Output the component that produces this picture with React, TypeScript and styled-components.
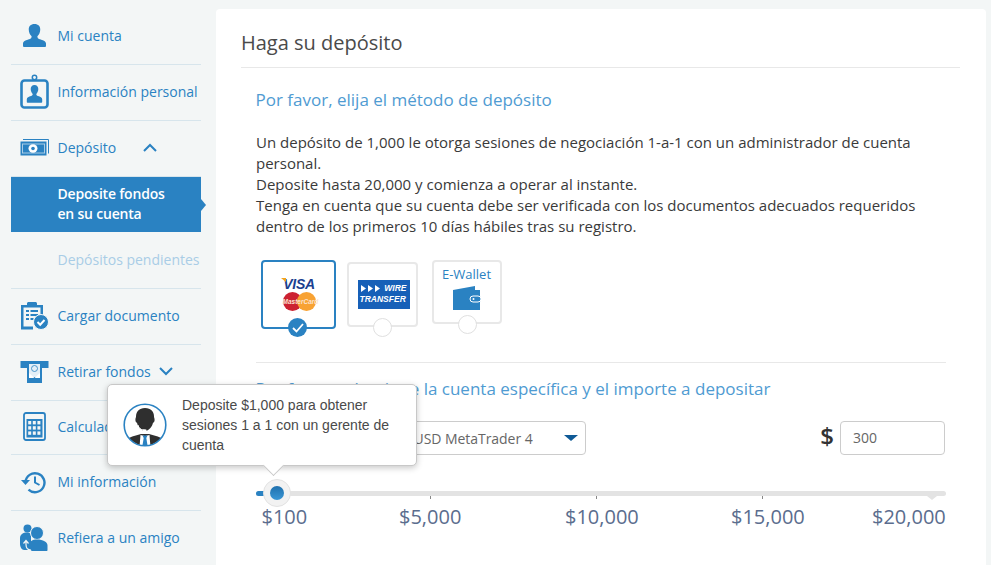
import React from "react";
import styled, { createGlobalStyle } from "styled-components";

const BLUE = "#2a82c2";

const GlobalStyle = createGlobalStyle`
  html, body {
    margin: 0;
    padding: 0;
    background: #f3f6f6;
  }
  body {
    font-family: "Open Sans", sans-serif;
    width: 991px;
    height: 565px;
    overflow: hidden;
  }
`;

const Page = styled.div`
  display: flex;
  height: 565px;
  overflow: hidden;
`;

const Sidebar = styled.nav`
  width: 190px;
  margin: 9px 15px 0 11px;
  flex: none;
`;

const NavItem = styled.a<{ $h?: number; $muted?: boolean; $noLine?: boolean }>`
  display: flex;
  align-items: center;
  height: ${(p) => p.$h ?? 56}px;
  box-sizing: border-box;
  padding-bottom: 2px;
  border-bottom: 1px solid ${(p) => (p.$noLine ? "transparent" : "#d7e5ec")};
  color: ${(p) => (p.$muted ? "#a9cde6" : BLUE)};
  font-size: 14px;
  white-space: nowrap;
`;

const IconSlot = styled.span<{ $inset?: number }>`
  width: 46.5px;
  padding-left: ${(p) => 9 + (p.$inset ?? 0)}px;
  box-sizing: border-box;
  flex: none;
  display: flex;
  align-items: center;
`;

const Chevron = styled.svg<{ $gap: number }>`
  margin-left: ${(p) => p.$gap}px;
  flex: none;
`;

const ActiveItem = styled.a`
  position: relative;
  display: block;
  height: 55px;
  box-sizing: border-box;
  padding: 7px 0 0 46.5px;
  background: ${BLUE};
  color: #fff;
  font-size: 14px;
  font-weight: 600;
  line-height: 20px;
  letter-spacing: -0.2px;
  &::after {
    content: "";
    position: absolute;
    left: 100%;
    top: 22px;
    border-left: 5px solid ${BLUE};
    border-top: 6px solid transparent;
    border-bottom: 6px solid transparent;
  }
`;

const Panel = styled.main`
  flex: none;
  width: 770px;
  height: 600px;
  margin-top: 9px;
  background: #fff;
  border-radius: 4px;
  box-sizing: border-box;
  padding: 0 26px 0 25px;
`;

const Title = styled.h1`
  margin: 0;
  height: 59px;
  box-sizing: border-box;
  padding-top: 19px;
  border-bottom: 1px solid #e8e8e8;
  font-size: 20px;
  line-height: 30px;
  font-weight: 400;
  color: #4a4a4a;
`;

const Body = styled.div`
  padding: 0 14px 0 15px;
`;

const SubTitle = styled.h2<{ $top: number }>`
  margin: ${(p) => p.$top}px 0 0 -0.5px;
  font-size: 17px;
  line-height: 24px;
  font-weight: 400;
  color: #4f9bd2;
`;

const Intro = styled.p`
  margin: 20px 0 0;
  font-size: 15px;
  line-height: 21px;
  color: #3a3a3a;
`;

const Methods = styled.div`
  display: flex;
  align-items: flex-start;
  height: 102px;
  margin-top: 23px;
  padding-left: 5px;
  border-bottom: 1px solid #e8e8e8;
`;

const Method = styled.div<{ $w: number; $h: number; $selected?: boolean; $ml?: number; $mt?: number }>`
  position: relative;
  width: ${(p) => p.$w}px;
  height: ${(p) => p.$h}px;
  margin-left: ${(p) => p.$ml ?? 0}px;
  margin-top: ${(p) => p.$mt ?? 0}px;
  box-sizing: border-box;
  border-radius: 4px;
  border: ${(p) => (p.$selected ? `2px solid ${BLUE}` : "2px solid #e8e8e8")};
  display: flex;
  flex-direction: column;
  align-items: center;
  background: #fff;
`;

const Radio = styled.span<{ $on?: boolean; $bottom: number }>`
  position: absolute;
  left: 50%;
  bottom: ${(p) => p.$bottom}px;
  width: 19px;
  height: 19px;
  margin-left: ${(p) => (p.$on ? -10.5 : -9.5)}px;
  border-radius: 50%;
  background: ${(p) => (p.$on ? BLUE : "#fff")};
  border: ${(p) => (p.$on ? "none" : "1px solid #e0e0e0")};
  box-sizing: border-box;
  display: flex;
  align-items: center;
  justify-content: center;
`;

const WireBox = styled.div`
  margin: 16px 0 0 2px;
  width: 52px;
  height: 29px;
  background: #1760b8;
  color: #fff;
  font-family: "Liberation Sans", sans-serif;
  font-size: 8.5px;
  line-height: 11px;
  font-weight: 700;
  font-style: italic;
  box-sizing: border-box;
  padding: 3px 0 0 2px;
  white-space: nowrap;
`;

const WireTop = styled.div`
  display: flex;
  align-items: center;
  justify-content: space-between;
  padding: 0 3px 0 1px;
`;

const VisaText = styled.div`
  position: relative;
  margin: 16px 0 0 1px;
  font-family: "Liberation Sans", sans-serif;
  font-size: 14px;
  line-height: 12px;
  font-weight: 700;
  font-style: italic;
  letter-spacing: -0.3px;
  color: #1a3f8f;
  &::before {
    content: "";
    position: absolute;
    left: -2px;
    top: 0;
    border-top: 4px solid #f2a31f;
    border-left: 5px solid transparent;
  }
`;

const CardLogo = styled.div`
  position: relative;
  width: 33px;
  height: 19px;
  margin: 2px 0 0 1px;
`;

const MasterText = styled.span`
  position: absolute;
  left: 0;
  right: 0;
  top: 5px;
  text-align: center;
  font-family: "Liberation Sans", sans-serif;
  font-size: 6.5px;
  line-height: 9px;
  font-weight: 700;
  font-style: italic;
  color: #fbe3d0;
  white-space: nowrap;
`;

const EWalletLabel = styled.div`
  margin: 3px 1px 0 0;
  font-size: 13px;
  line-height: 18px;
  color: ${BLUE};
`;

const WalletSvg = styled.svg`
  margin-top: 2px;
`;

const FormRow = styled.div`
  display: flex;
  align-items: center;
  justify-content: flex-end;
  margin-top: 20px;
  height: 34px;
`;

const SelectBox = styled.div`
  width: 264px;
  height: 34px;
  margin-right: auto;
  margin-left: 66px;
  box-sizing: border-box;
  border: 1px solid #ccc;
  border-radius: 4px;
  display: flex;
  align-items: center;
  justify-content: space-between;
  padding: 0 7px 0 90.5px;
  font-size: 14px;
  letter-spacing: -0.05px;
  color: #666;
  white-space: nowrap;
`;

const Caret = styled.span`
  border-top: 6px solid #0f5a96;
  border-left: 7px solid transparent;
  border-right: 7px solid transparent;
`;

const Dollar = styled.span`
  font-size: 24px;
  line-height: 30px;
  font-weight: 600;
  color: #333;
  margin: 0 6px 4px 0;
`;

const AmountInput = styled.div`
  width: 105px;
  height: 34px;
  margin-right: 1px;
  box-sizing: border-box;
  border: 1px solid #ccc;
  border-radius: 4px;
  padding-left: 12px;
  font-size: 14px;
  line-height: 32px;
  color: #666;
`;

const Track = styled.div`
  position: relative;
  height: 5px;
  margin-top: 36px;
  background: #e3e3e3;
  border-radius: 3px;
`;

const TrackFill = styled.div`
  position: absolute;
  left: 0;
  top: 0;
  height: 5px;
  width: 20px;
  background: ${BLUE};
  border-radius: 3px;
`;

const Thumb = styled.div`
  position: absolute;
  left: 7px;
  top: -12px;
  width: 28px;
  height: 28px;
  box-sizing: border-box;
  border-radius: 50%;
  background: #f2f2f2;
  border: 1px solid #e2e2e2;
  display: flex;
  align-items: center;
  justify-content: center;
  &::after {
    content: "";
    width: 14px;
    height: 14px;
    border-radius: 50%;
    background: linear-gradient(#1f70ad, #3a97d6);
  }
`;

const Tick = styled.span<{ $left: number }>`
  position: absolute;
  top: 5px;
  left: ${(p) => p.$left}px;
  width: 1px;
  height: 3px;
  background: #888;
`;

const EndMark = styled.span`
  position: absolute;
  top: 5px;
  right: 9px;
  border-top: 4px solid #e3e3e3;
  border-left: 5px solid transparent;
  border-right: 5px solid transparent;
`;

const Scale = styled.div`
  display: grid;
  grid-template-columns: 137.5px 166px 166px 141px auto;
  margin-top: 8px;
  padding-left: 5.5px;
  font-size: 20px;
  line-height: 26px;
  color: #5b6d8e;
  white-space: nowrap;
`;

const Bubble = styled.div`
  position: absolute;
  left: 107px;
  top: 384px;
  width: 310px;
  height: 82px;
  box-sizing: border-box;
  background: #fff;
  border: 1px solid #c8c8c8;
  border-radius: 5px;
  box-shadow: 0 2px 6px rgba(0, 0, 0, 0.22);
  display: flex;
  align-items: center;
  padding-left: 15px;
  &::after {
    content: "";
    position: absolute;
    left: 158px;
    bottom: -8px;
    width: 14px;
    height: 14px;
    background: #fff;
    border-right: 1px solid #c8c8c8;
    border-bottom: 1px solid #c8c8c8;
    transform: rotate(45deg);
  }
`;

const AgentSvg = styled.svg`
  flex: none;
`;

const BubbleText = styled.div`
  margin-left: 15px;
  font-family: "Liberation Sans", sans-serif;
  font-size: 14px;
  line-height: 20px;
  color: #4a4a4a;
  white-space: nowrap;
`;

const UserIcon = () => (
  <svg width="23" height="23" viewBox="0 0 24 26" preserveAspectRatio="none" fill={BLUE}>
    <path d="M12 0c4 0 6 2.500 6 6.300 0 3.200-1.300 6-3 7.500 0 1.800.7 2.800 2.500 3.400 3 1 6.500 2 6.500 4.800v3c0 .6-.4 1-1 1H1c-.6 0-1-.4-1-1v-3c0-2.800 3.500-3.800 6.500-4.800 1.800-.6 2.500-1.600 2.500-3.400-1.700-1.500-3-4.300-3-7.500C6 2.500 8 0 12 0z" />
  </svg>
);

const BadgeIcon = () => (
  <svg width="29" height="35" viewBox="0 0 29 35">
    <rect x="1.500" y="6.500" width="26" height="27" rx="3" fill="none" stroke={BLUE} strokeWidth="2.600" />
    <circle cx="14.500" cy="3.500" r="2.200" fill="none" stroke={BLUE} strokeWidth="1.500" />
    <path fill={BLUE} d="M14.500 11c2.500 0 3.800 1.700 3.800 4.100 0 2-.9 3.800-2 4.800 0 1 .5 1.700 1.700 2.100 2.100.7 4.200 1.400 4.200 3.300V28c0 .4-.3.700-.7.700H7.500c-.4 0-.7-.3-.7-.7v-2.700c0-1.900 2.100-2.600 4.200-3.300 1.200-.4 1.700-1.100 1.700-2.100-1.100-1-2-2.800-2-4.800 0-2.400 1.300-4.100 3.800-4.100z" />
  </svg>
);

const CashIcon = () => (
  <svg width="29" height="17" viewBox="0 0 29 17">
    <path d="M3 .5h25.500v14" stroke={BLUE} strokeWidth="1" fill="none" />
    <rect x="0.500" y="2.500" width="26" height="14" fill={BLUE} />
    <rect x="2.500" y="5" width="22" height="9" fill={BLUE} stroke="#a9cde6" strokeWidth="1" />
    <ellipse cx="13" cy="9.500" rx="4.500" ry="4.200" fill="#fff" />
    <circle cx="13" cy="9.500" r="1.800" fill={BLUE} />
  </svg>
);

const ClipboardIcon = () => (
  <svg width="29" height="29" viewBox="0 0 29 29">
    <path fill={BLUE} d="M1 4h6V2.500C7 1.700 7.700 1 8.500 1h7c.8 0 1.500.7 1.500 1.500V4h6v11h-2.500V6.500h-17v19H13v3H1z" />
    <path fill={BLUE} d="M6 9h3v2H6zm4.500 0H18v2h-7.500zM6 13h3v2H6zm4.500 0H18v2h-7.500zM6 17h3v2H6zm4.500 0h3v2h-3z" />
    <circle cx="21" cy="21" r="7.500" fill={BLUE} stroke="#f3f6f6" strokeWidth="1" />
    <path d="M17.500 21l2.700 2.700 4.300-4.700" fill="none" stroke="#fff" strokeWidth="2" />
  </svg>
);

const AtmIcon = () => (
  <svg width="29" height="22" viewBox="0 0 29 22">
    <rect x="0.500" y="0" width="28" height="7" fill={BLUE} />
    <rect x="7" y="3" width="15" height="19" fill={BLUE} />
    <rect x="9" y="3" width="11" height="13" fill="#e4eff7" />
    <path d="M9 12l5.500 5 5.500-5v5H9z" fill="#fff" />
    <circle cx="14.500" cy="7.500" r="3" fill="none" stroke={BLUE} strokeWidth="0.800" />
  </svg>
);

const CalcIcon = () => (
  <svg width="29" height="29" viewBox="0 0 29 29">
    <rect x="4" y="1" width="21" height="27" rx="2" fill="none" stroke={BLUE} strokeWidth="1.800" />
    <rect x="6.500" y="7" width="16" height="18.500" fill={BLUE} />
    {[0, 1, 2].map((r) =>
      [0, 1, 2].map((c) => (
        <rect key={`${r}-${c}`} x={8.2 + c * 4.6} y={9 + r * 5.2} width="3" height="3.400" fill="#f3f6f6" />
      ))
    )}
  </svg>
);

const HistoryIcon = () => (
  <svg width="26" height="24" viewBox="0 0 26 24" fill="none" stroke={BLUE} strokeWidth="2.400">
    <path d="M5.500 12a9.500 9.500 0 1 1 3 7.700" />
    <path d="M1 10l4.500 5 4.500-5z" fill={BLUE} stroke="none" />
    <path d="M15 6.500V12.500l4.500 2.500" strokeWidth="2" />
  </svg>
);

const FriendsIcon = () => (
  <svg width="28" height="27" viewBox="0 0 28 27" fill={BLUE}>
    <circle cx="7.500" cy="4.500" r="4" />
    <path d="M0 14c0-3.500 3-5.500 7-5.500 1.500 0 3 .5 4 1.500v16H4C2 26 0 23 0 20z" />
    <circle cx="17" cy="9" r="6.500" stroke="#f3f6f6" strokeWidth="1" />
    <path d="M9 21c0-3.500 3.500-5.500 8-5.500 6 0 10.500 2.500 10.500 6V26c0 .6-.4 1-1 1H12c-1 0-3-3-3-6z" />
    <path d="M11 26c-3 0-5-2-5-5.500V17M3.500 19.500L6 16.500l2.500 3" fill="none" stroke="#f3f6f6" strokeWidth="1.200" />
  </svg>
);

const ChevronIcon = ({ up, gap }: { up?: boolean; gap: number }) => (
  <Chevron $gap={gap} width="14" height="9" viewBox="0 0 14 9" fill="none" stroke={BLUE} strokeWidth="2">
    <path d={up ? "M1 8l6-6 6 6" : "M1 1l6 6 6-6"} />
  </Chevron>
);

const AgentIcon = () => (
  <AgentSvg width="44" height="44" viewBox="0 0 44 44">
    <defs>
      <clipPath id="agentClip">
        <circle cx="22" cy="22" r="20.500" />
      </clipPath>
    </defs>
    <circle cx="22" cy="22" r="21" fill="#fff" />
    <g clipPath="url(#agentClip)">
      <path fill="#2f2f2f" d="M3 44v-5c0-3 3-4.500 8-6l7-2h8l7 2c5 1.500 8 3 8 6v5z" />
      <path fill="#fff" d="M17.500 32l4.500 1 4.500-1 1 12h-11z" />
      <path fill={BLUE} d="M19.500 32.500h5l-1.200 2.500 1.500 9h-5.600l1.500-9z" />
      <path fill="#2f2f2f" d="M22 5c6 0 9 4 9 8.500 0 1 .6 1.800.6 3.400s-.8 2.600-1.600 2.900c-.8 3.800-4 8.200-8 8.200s-7.200-4.400-8-8.200c-.8-.3-1.600-1.300-1.600-2.900s.6-2.400.6-3.400C13 9 16 5 22 5z" />
      <path fill="none" stroke="#fff" strokeWidth="1" d="M15 22c.5 3 3 5 6 5.200" />
      <ellipse cx="21.500" cy="27.300" rx="2.200" ry="1" fill="#fff" />
    </g>
    <circle cx="22" cy="22" r="20.800" fill="none" stroke={BLUE} strokeWidth="1.600" />
  </AgentSvg>
);

const WalletIcon = () => (
  <WalletSvg width="28" height="26" viewBox="0 0 28 26" fill={BLUE}>
    <path d="M0 5L22 1v4z" />
    <rect x="0" y="5" width="27" height="20" />
    <rect x="17" y="11" width="11" height="6" rx="3" fill={BLUE} stroke="#fff" strokeWidth="1" />
    <circle cx="20.500" cy="14" r="1" fill="#fff" />
  </WalletSvg>
);

const WireArrows = () => (
  <svg width="20" height="7" viewBox="0 0 20 7" fill="#fff">
    <path d="M0 0l5 3.500L0 7zM7 0l5 3.500L7 7zM14 0l5 3.500L14 7z" />
  </svg>
);

const App: React.FC = () => (
  <Page>
    <GlobalStyle />
    <Sidebar>
      <NavItem>
        <IconSlot $inset={3}><UserIcon /></IconSlot>
        Mi cuenta
      </NavItem>
      <NavItem>
        <IconSlot><BadgeIcon /></IconSlot>
        Información personal
      </NavItem>
      <NavItem>
        <IconSlot><CashIcon /></IconSlot>
        Depósito
        <ChevronIcon up gap={27} />
      </NavItem>
      <ActiveItem>
        Deposite fondos
        <br />
        en su cuenta
      </ActiveItem>
      <NavItem $h={57} $muted>
        <IconSlot />
        Depósitos pendientes
      </NavItem>
      <NavItem>
        <IconSlot><ClipboardIcon /></IconSlot>
        Cargar documento
      </NavItem>
      <NavItem>
        <IconSlot><AtmIcon /></IconSlot>
        Retirar fondos
        <ChevronIcon gap={8} />
      </NavItem>
      <NavItem $h={54}>
        <IconSlot><CalcIcon /></IconSlot>
        Calculadora
      </NavItem>
      <NavItem>
        <IconSlot><HistoryIcon /></IconSlot>
        Mi información
      </NavItem>
      <NavItem $h={55} $noLine>
        <IconSlot><FriendsIcon /></IconSlot>
        Refiera a un amigo
      </NavItem>
    </Sidebar>
    <Panel>
      <Title>Haga su depósito</Title>
      <Body>
        <SubTitle $top={20}>Por favor, elija el método de depósito</SubTitle>
        <Intro>
          Un depósito de 1,000 le otorga sesiones de negociación 1-a-1 con un administrador de cuenta personal.
          <br />
          Deposite hasta 20,000 y comienza a operar al instante.
          <br />
          Tenga en cuenta que su cuenta debe ser verificada con los documentos adecuados requeridos dentro de los primeros 10 días hábiles tras su registro.
        </Intro>
        <Methods>
          <Method $w={75} $h={69} $selected>
            <VisaText>VISA</VisaText>
            <CardLogo>
              <svg width="33" height="19" viewBox="0 0 33 19">
                <circle cx="9.500" cy="9.500" r="9.500" fill="#cc2131" />
                <circle cx="23.500" cy="9.500" r="9.500" fill="#f8a233" />
              </svg>
              <MasterText>MasterCard</MasterText>
            </CardLogo>
            <Radio $on $bottom={-10}>
              <svg width="12" height="10" viewBox="0 0 12 10" fill="none" stroke="#fff" strokeWidth="1.800">
                <path d="M1 5l3.500 3.500L11 1" />
              </svg>
            </Radio>
          </Method>
          <Method $w={71} $h={65} $ml={11} $mt={2}>
            <WireBox>
              <WireTop>
                <WireArrows />
                WIRE
              </WireTop>
              TRANSFER
            </WireBox>
            <Radio $bottom={-12} />
          </Method>
          <Method $w={70} $h={64} $ml={14}>
            <EWalletLabel>E-Wallet</EWalletLabel>
            <WalletIcon />
            <Radio $bottom={-12} />
          </Method>
        </Methods>
        <SubTitle $top={14}>Por favor, seleccione la cuenta específica y el importe a depositar</SubTitle>
        <FormRow>
          <SelectBox>
            USD MetaTrader 4
            <Caret />
          </SelectBox>
          <Dollar>$</Dollar>
          <AmountInput>300</AmountInput>
        </FormRow>
        <Track>
          <TrackFill />
          <Thumb />
          <Tick $left={174} />
          <Tick $left={340} />
          <Tick $left={506} />
          <EndMark />
        </Track>
        <Scale>
          <span>$100</span>
          <span>$5,000</span>
          <span>$10,000</span>
          <span>$15,000</span>
          <span>$20,000</span>
        </Scale>
      </Body>
    </Panel>
    <Bubble>
      <AgentIcon />
      <BubbleText>
        Deposite $1,000 para obtener
        <br />
        sesiones 1 a 1 con un gerente de
        <br />
        cuenta
      </BubbleText>
    </Bubble>
  </Page>
);

export default App;
